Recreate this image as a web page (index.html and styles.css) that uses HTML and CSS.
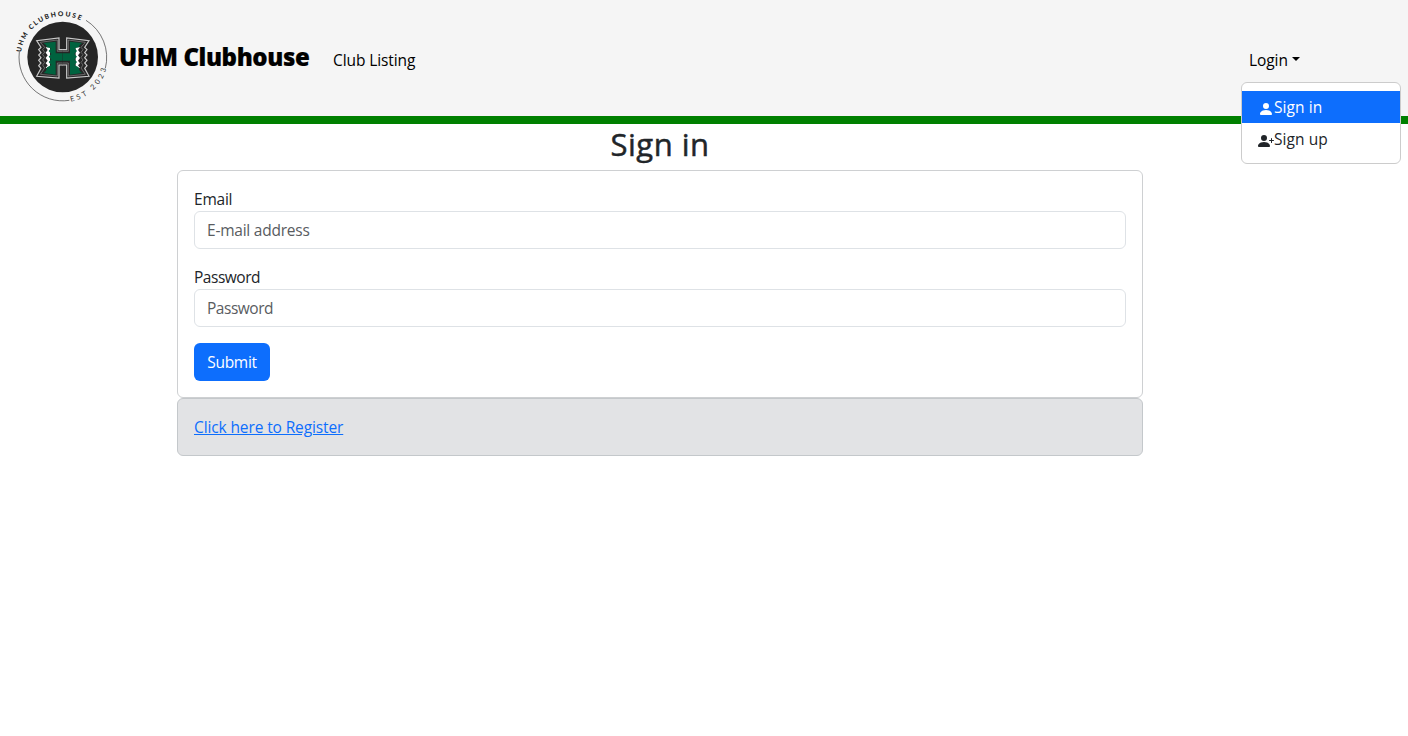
FILE: index.html
```html
<!DOCTYPE html>
<html lang="en">
<head>
<meta charset="utf-8">
<title>UHM Clubhouse</title>
<link rel="stylesheet" href="styles.css">
</head>
<body>
<nav class="navbar">
  <a class="brand" href="#">
    <svg class="logo" viewBox="0 0 306 306" aria-label="UHM Clubhouse logo">
      <defs>
        <path id="arc-top" d="M33 142 A125 125 0 0 1 230 57"/>
        <path id="arc-bottom" d="M182 290 A136 136 0 0 0 291 182"/>
        <g id="half-h">
          <path d="M159 134H147V99L80 107L93 127L86 134L93 143L86 150L93 158L86 166L93 174L86 182L93 190L80 214L147 219V180H159" fill="#262626" stroke="#c9c9c9" stroke-width="3.500"/>
          <path d="M159 139H142V105L91 112L104 127L98 134L104 142L98 149L104 157L98 165L104 172L98 180L104 189L91 208L142 213V174H159" fill="#262626" stroke="#aaa" stroke-width="1.500"/>
          <path d="M107 127H120V189H107L113 181L107 175L113 167L107 159L113 151L107 143L113 135Z" fill="#fff"/>
          <path d="M159 145H137V110L101 114Q110 120 111 127L123 130L116 138L124 147L116 155L124 163L116 171L124 180L111 187Q110 199 101 204L137 209V167H159Z" fill="#00633f"/>
        </g>
      </defs>
      <circle cx="158" cy="156" r="106" fill="#262626"/>
      <path d="M28 141 A131 131 0 0 0 178 286 M286 190 A131 131 0 0 0 228 46" fill="none" stroke="#333" stroke-width="2"/>
      <text class="ring-text ring-top"><textPath href="#arc-top" textLength="236">UHM CLUBHOUSE</textPath></text>
      <text class="ring-text ring-bottom"><textPath href="#arc-bottom" textLength="154">EST 2023</textPath></text>
      <use href="#half-h"/>
      <use href="#half-h" transform="translate(317 0) scale(-1 1)"/>
    </svg>
    <span class="brand-name">UHM Clubhouse</span>
  </a>
  <a class="nav-link" href="#">Club Listing</a>
  <div class="login">
    <a class="nav-link login-toggle" href="#">Login<span class="caret"></span></a>
    <div class="menu">
      <a class="menu-item active" href="#"><svg class="icon" viewBox="0 0 16 16"><path d="M3 14s-1 0-1-1 1-4 6-4 6 3 6 4-1 1-1 1zm5-6a3 3 0 1 0 0-6 3 3 0 0 0 0 6"/></svg><span>Sign in</span></a>
      <a class="menu-item" href="#"><svg class="icon" viewBox="0 0 16 16"><path d="M1 14s-1 0-1-1 1-4 6-4 6 3 6 4-1 1-1 1zm5-6a3 3 0 1 0 0-6 3 3 0 0 0 0 6"/><path fill-rule="evenodd" d="M13.5 5a.5.5 0 0 1 .5.5V7h1.500a.5.5 0 0 1 0 1H14v1.500a.5.5 0 0 1-1 0V8h-1.500a.5.5 0 0 1 0-1H13V5.500a.5.5 0 0 1 .5-.5"/></svg><span>Sign up</span></a>
    </div>
  </div>
</nav>
<main class="content">
  <h2 class="title">Sign in</h2>
  <form class="card">
    <div class="field"><label for="email">Email</label><input class="input" id="email" type="email" placeholder="E-mail address"></div>
    <div class="field field-password"><label for="password">Password</label><input class="input" id="password" type="password" placeholder="Password"></div>
    <button class="submit" type="button">Submit</button>
  </form>
  <div class="card register"><a class="register-link" href="#">Click here to Register</a></div>
</main>
</body>
</html>
```
FILE: styles.css
```css
* { box-sizing: border-box; }
body {
  margin: 0;
  background: #fff;
  color: #212529;
  font: 15.5px/24px "Segoe UI", "Open Sans", "Noto Sans", sans-serif;
}
a { color: inherit; text-decoration: none; }
.navbar {
  display: flex;
  align-items: center;
  height: 124px;
  padding: 0 7px 0 10px;
  background: #f5f5f5;
  border-bottom: 8px solid #008000;
  color: #000;
  letter-spacing: -0.09px;
}
.brand { display: flex; align-items: center; height: 116px; }
.logo { width: 102px; height: 102px; margin-top: -4px; }
.ring-text { font-family: Lato, sans-serif; letter-spacing: 0; }
.ring-top { font-size: 20px; font-weight: 900; fill: #222; }
.ring-bottom { font-size: 22px; fill: #333; }
.brand-name {
  width: 190px;
  margin: -2px 0 0 7px;
  font-size: 24px;
  font-weight: 800;
  line-height: 36px;
  letter-spacing: -0.4px;
  white-space: nowrap;
  -webkit-text-stroke: 0.2px #000;
}
.nav-link { display: flex; align-items: center; margin: 4px 0 0 24px; }
.login { position: relative; width: 160px; margin-left: auto; }
.login-toggle { margin-left: 8px; }
.caret {
  margin: -2px 0 0 4px;
  border: 4.8px solid transparent;
  border-top-color: currentColor;
  border-bottom: 0;
}
.menu {
  position: absolute;
  top: 38px;
  left: 0;
  width: 160px;
  height: 82px;
  padding: 8px 0;
  background: #fff;
  border: 1px solid #ccc;
  border-radius: 6px;
  color: #212529;
  letter-spacing: 0.06px;
}
.menu-item { display: flex; align-items: center; height: 32px; padding-left: 16px; }
.menu-item.active { background: #0d6efd; color: #fff; }
.icon { width: 16px; height: 16px; margin-top: 3px; fill: currentColor; }
.content { width: 966px; margin-left: 177px; }
.title {
  height: 38px;
  margin: 0 0 8px;
  padding-top: 1px;
  font-size: 31px;
  font-weight: 500;
  line-height: 38px;
  letter-spacing: 0.5px;
  text-align: center;
  -webkit-text-stroke: 0.5px #212529;
}
.card {
  padding: 16px;
  background: #fff;
  border: 1px solid #ced0d2;
  border-radius: 6px;
}
.field { display: flex; flex-direction: column; margin-bottom: 16px; letter-spacing: -0.23px; }
.field-password { letter-spacing: -0.47px; }
.input {
  height: 38px;
  padding: 6px 12px;
  border: 1px solid #dee2e6;
  border-radius: 6px;
  background: #fff;
  font: inherit;
  letter-spacing: inherit;
}
.input::placeholder { color: #595c5f; opacity: 1; }
.submit {
  display: block;
  width: 76px;
  height: 38px;
  padding: 0;
  border: 0;
  border-radius: 6px;
  background: #0d6efd;
  color: #fff;
  font: inherit;
  letter-spacing: -0.3px;
}
.register { height: 58px; background: #e2e3e5; border-color: #c4c8cb; letter-spacing: -0.12px; }
.register-link { color: #0d6efd; text-decoration: underline; }
```
